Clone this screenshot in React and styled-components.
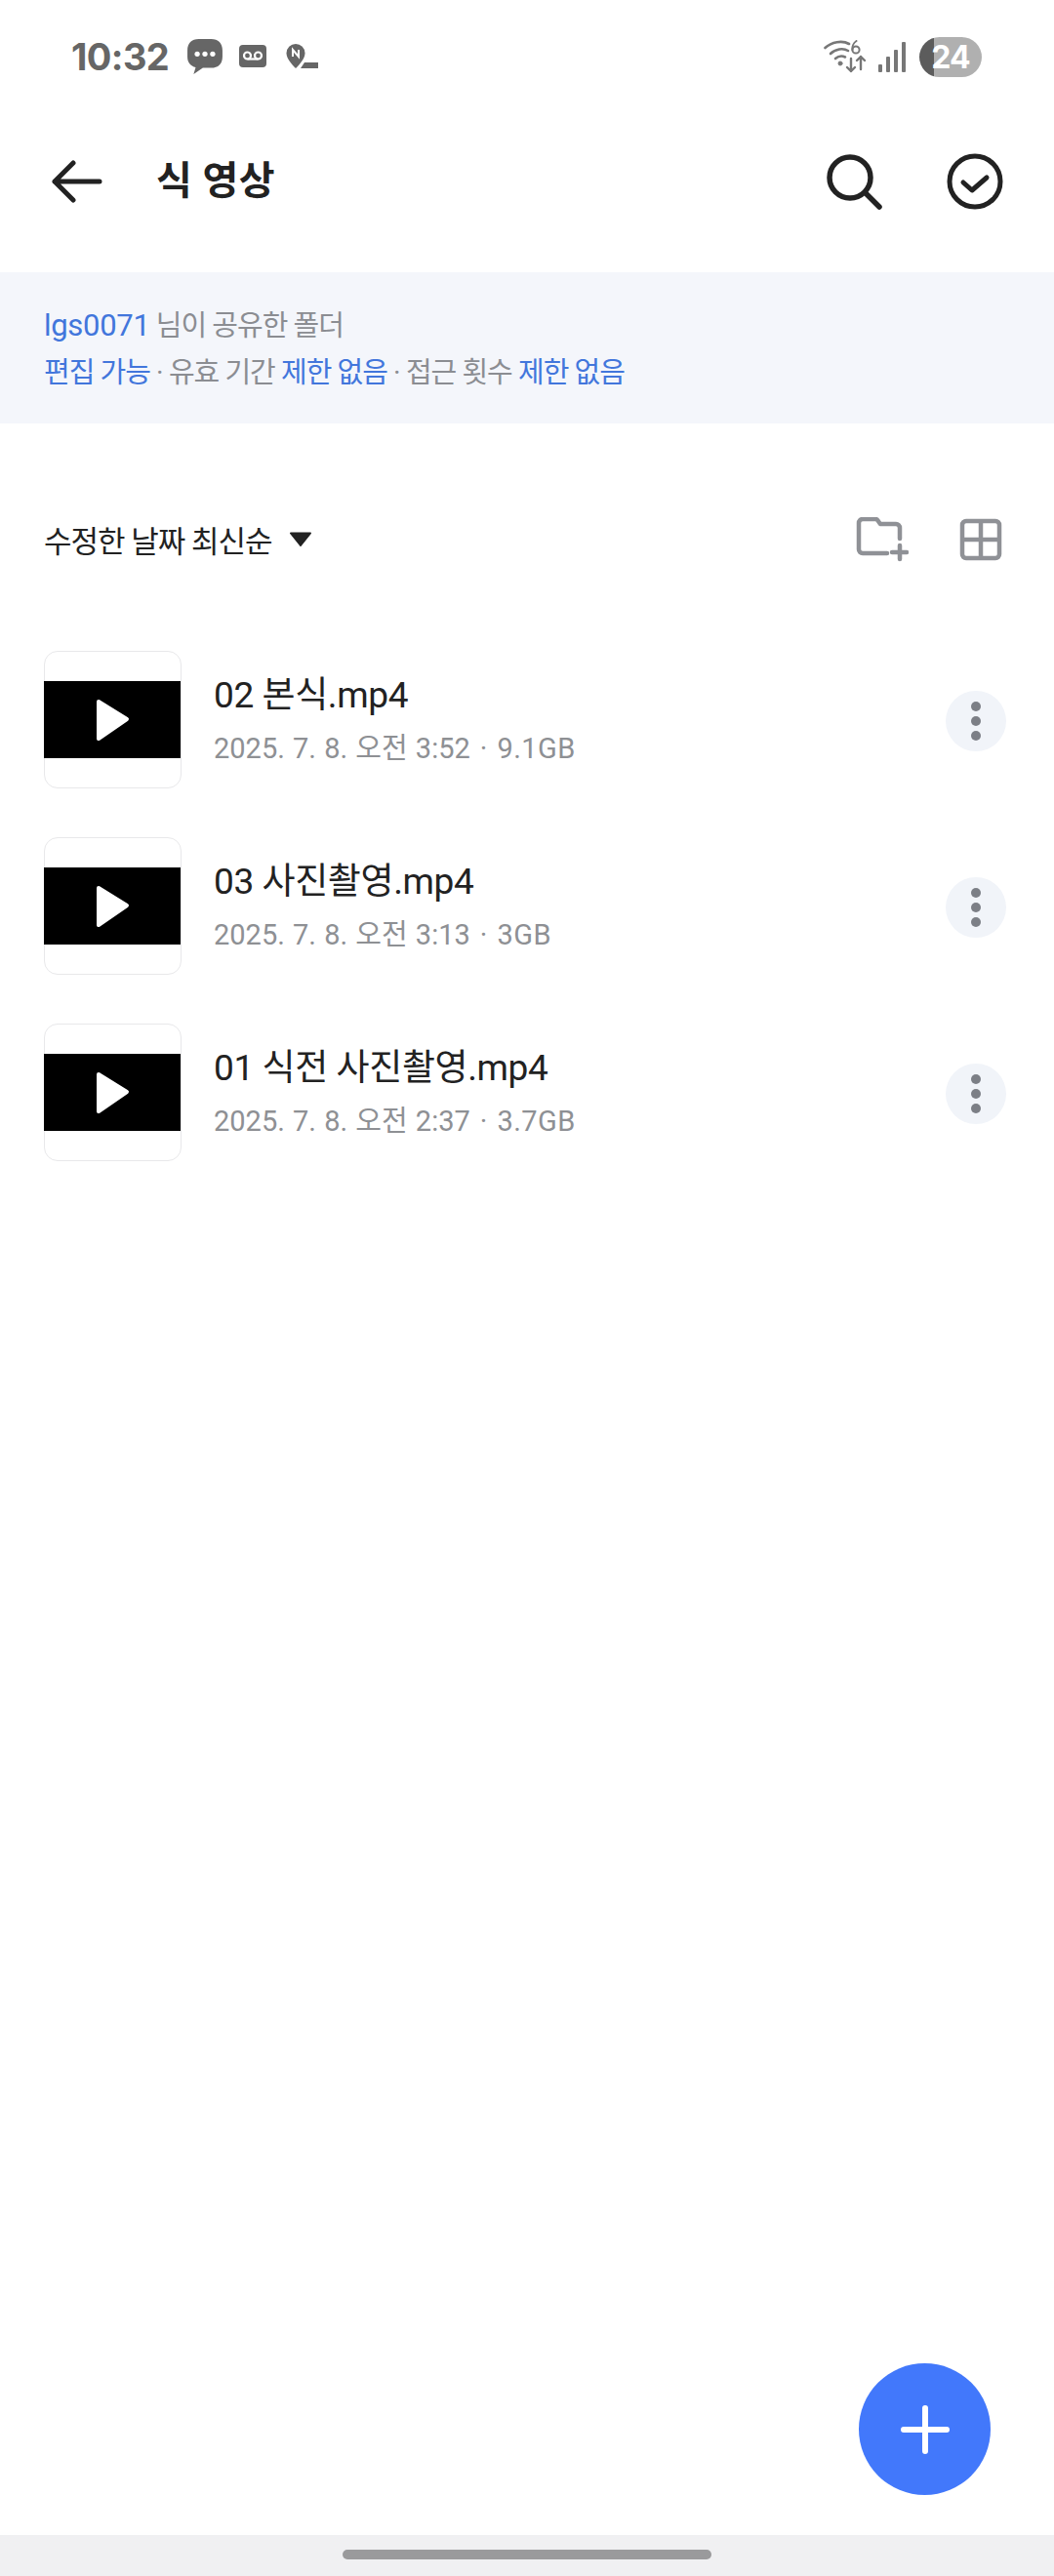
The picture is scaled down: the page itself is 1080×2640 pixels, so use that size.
import React from "react";
import styled, { createGlobalStyle } from "styled-components";

const Global = createGlobalStyle`
  html, body { margin: 0; padding: 0; background: #fff; }
  * { box-sizing: border-box; }
  body { font-family: "Roboto", "Noto Sans CJK KR", sans-serif; }
`;
const Page = styled.div`
  position: relative; width: 1080px; height: 2640px; background: #fff;
  display: flex; flex-direction: column; overflow: hidden;
`;
const StatusBar = styled.div`
  height: 116px; display: flex; align-items: center; justify-content: space-between;
  padding: 0 74px 0 73px; flex: none;
`;
const StatusLeft = styled.div`display: flex; align-items: center;`;
const Time = styled.span`
  font-family: "Inter", sans-serif; font-weight: 700; font-size: 38px; letter-spacing: -0.6px; color: #666; width: 118px;
`;
const StatusRight = styled.div`display: flex; align-items: center;`;
const Battery = styled.div`
  position: relative; width: 64px; height: 41px; border-radius: 21px; overflow: hidden; margin-left: 14px;
  background: linear-gradient(90deg, #5c5c5c 0 15px, #b0b0b0 15px);
  display: flex; align-items: center; justify-content: center;
  font-family: "Inter", sans-serif; font-weight: 700; font-size: 32px; color: #fff; letter-spacing: -1px;
`;
const Header = styled.div`
  height: 140px; flex: none; display: flex; align-items: center; padding: 0 52px 0 53px; margin-bottom: 23px;
`;
const Title = styled.h1`
  margin: 0 0 0 55px; flex: 1; font-size: 40px; font-weight: 700; color: #222; line-height: 1; letter-spacing: 0.4px;
`;
const HeaderActions = styled.div`display: flex; align-items: center; gap: 66px;`;
const Banner = styled.div`
  height: 155px; flex: none; background: #f4f6fb; padding: 31px 45px 0; font-size: 29px; line-height: 48px;
  letter-spacing: -1px; color: #8b8d92; white-space: nowrap;
`;
const Blue = styled.span`color: #4276dc;`;
const Latin = styled.span`font-size: 31px; letter-spacing: -0.3px;`;
const SortRow = styled.div`
  margin-top: 68px; height: 100px; flex: none; display: flex; align-items: center; justify-content: space-between; padding: 0 45px;
`;
const SortLabel = styled.div`
  display: flex; align-items: center; gap: 17px; font-size: 31px; color: #222; letter-spacing: -1px;
`;
const SortActions = styled.div`display: flex; align-items: center; gap: 52px; margin-right: 8px; padding-top: 2px;`;
const List = styled.div`margin-top: 41px; display: flex; flex-direction: column;`;
const Row = styled.div`
  height: 191px; display: flex; align-items: center; padding: 0 49px 0 45px;
`;
const Thumb = styled.div`
  width: 141px; height: 141px; border: 1.5px solid #e8e8ea; border-radius: 14px; flex: none;
  display: flex; align-items: center; margin-top: -2px;
`;
const ThumbVideo = styled.div`
  width: 141px; margin-left: -1.5px; height: 79px; background: #000; display: flex; align-items: center; justify-content: center;
`;
const Info = styled.div`flex: 1; margin-left: 33px; margin-top: -3px;`;
const Name = styled.div`
  font-size: 37px; line-height: 46px; color: #222; letter-spacing: -0.4px;
`;
const Meta = styled.div`
  margin-top: 13px; font-size: 29px; line-height: 36px; color: #8e9094; letter-spacing: 0;
  word-spacing: 1px;
`;
const Sep = styled.span`margin: 0 10px;`;
const Size = styled.span`letter-spacing: 0.5px;`;
const Kebab = styled.div`
  width: 62px; height: 62px; border-radius: 50%; background: #f1f4f9; flex: none;
  display: flex; flex-direction: column; align-items: center; justify-content: center; gap: 5px;
`;
const Dot = styled.span`width: 10px; height: 10px; border-radius: 50%; background: #7c7f86;`;
const Fab = styled.div`
  position: absolute; left: 880px; top: 2422px; width: 135px; height: 135px; border-radius: 50%;
  background: #4278fb; display: flex; align-items: center; justify-content: center;
`;
const NavBar = styled.div`
  margin-top: auto; height: 42px; flex: none; background: #f0f0f2; display: flex; justify-content: center; padding-top: 15px;
`;
const Pill = styled.div`width: 378px; height: 10px; border-radius: 5px; background: #9a9a9c;`;

const Back = () => (
  <svg width="52" height="44" viewBox="0 0 52 44" fill="none" stroke="#222" strokeWidth="5" strokeLinecap="round" strokeLinejoin="round">
    <path d="M3 22H49M22 3 3 22l19 19" />
  </svg>
);
const Search = () => (
  <svg width="58" height="58" viewBox="0 0 58 58" fill="none" stroke="#222" strokeWidth="5.5" strokeLinecap="round">
    <circle cx="25" cy="25" r="21" /><path d="M41 41 55 55" />
  </svg>
);
const Check = () => (
  <svg width="58" height="58" viewBox="0 0 58 58" fill="none" stroke="#222" strokeWidth="5" strokeLinecap="round" strokeLinejoin="round">
    <circle cx="29" cy="29" r="26" /><path d="M17 30 26 38 41 25" />
  </svg>
);
const Caret = () => (
  <svg width="24" height="15" viewBox="0 0 24 15"><path d="M2 1.5H22L12 14Z" fill="#222" stroke="#222" strokeWidth="2" strokeLinejoin="round" /></svg>
);
const FolderPlus = () => (
  <svg width="54" height="46" viewBox="0 0 54 46" fill="none" stroke="#8f9196" strokeWidth="4.5" strokeLinecap="round" strokeLinejoin="round">
    <path d="M32 37H7a4 4 0 0 1-4-4V6a4 4 0 0 1 4-4h13a3 3 0 0 1 2.5 1.5L25 7h16a4 4 0 0 1 4 4v11" />
    <path d="M45 29V43M37 36H52" />
  </svg>
);
const Grid = () => (
  <svg width="44" height="44" viewBox="0 0 44 44" fill="none" stroke="#8f9196" strokeWidth="4.5" strokeLinejoin="round">
    <rect x="3" y="3" width="38" height="38" rx="4" /><path d="M22 3V41M3 22H41" />
  </svg>
);
const Play = () => (
  <svg width="36" height="46" viewBox="0 0 36 46">
    <path d="M4 4 33 22 4 42Z" fill="#fff" stroke="#fff" strokeWidth="4" strokeLinejoin="round" />
  </svg>
);
const Plus = () => (
  <svg width="50" height="50" viewBox="0 0 50 50" stroke="#fff" strokeWidth="6" strokeLinecap="round"><path d="M25 3V47M3 25H47" /></svg>
);
const Chat = () => (
  <svg width="38" height="38" viewBox="0 0 36 36" style={{ marginRight: 16 }}>
    <path d="M12 1h12c7 0 11 4 11 11v6c0 7-4 11-11 11H16l-9 6 2-6.500C4 27 1 24 1 18v-6C1 5 5 1 12 1Z" fill="#666" />
    <circle cx="10.500" cy="15.500" r="2.500" fill="#fff" /><circle cx="18" cy="15.500" r="2.500" fill="#fff" /><circle cx="25.500" cy="15.500" r="2.500" fill="#fff" />
  </svg>
);
const Voicemail = () => (
  <svg width="28" height="24" viewBox="0 0 28 24" style={{ marginRight: 20 }}>
    <rect width="28" height="23" rx="4" fill="#666" />
    <g fill="none" stroke="#fff" strokeWidth="2.200"><circle cx="8.500" cy="11" r="3.500" /><circle cx="19.500" cy="11" r="3.500" /><path d="M8.500 14.500H19.500" /></g>
  </svg>
);
const NaverPin = () => (
  <svg width="34" height="28" viewBox="0 0 34 28">
    <path d="M10 1a9.500 9.500 0 0 1 9.500 9.500C19.500 16 14 22 10 26 6 22 .500 16 .500 10.500A9.500 9.500 0 0 1 10 1Z" fill="#666" />
    <path d="M7 14V7l6 7V7" fill="none" stroke="#fff" strokeWidth="2" />
    <path d="M15 26 19 20H33V26Z" fill="#666" />
  </svg>
);
const Wifi = () => (
  <svg width="46" height="34" viewBox="0 0 46 34" fill="none" stroke="#777" strokeLinecap="round" strokeLinejoin="round">
    <g strokeWidth="2.600"><path d="M1.500 8C8 2 19 0 26 4" /><path d="M7 14C12 9 20 8 25 11" /><path d="M12 19c3-2.500 7-3 10-1.500" /></g>
    <circle cx="17" cy="24" r="2" fill="#777" />
    <circle cx="33" cy="10" r="3.600" strokeWidth="2" />
    <path d="M29.500 10c-.500-3 1-7 4-9" strokeWidth="2" />
    <g strokeWidth="2.400"><path d="M28 19V32M24 28l4 4 4-4" /><path d="M38 30V17M34 21l4-4 4 4" /></g>
  </svg>
);
const Signal = () => (
  <svg width="28" height="31" viewBox="0 0 28 31" fill="#777" style={{ marginLeft: 10 }}>
    <rect x="0" y="23" width="4" height="8" rx="1" /><rect x="8" y="15" width="4" height="16" rx="1" />
    <rect x="16" y="8" width="4" height="23" rx="1" /><rect x="24" y="0" width="4" height="31" rx="1" />
  </svg>
);

const files = [
  { name: "02 본식.mp4", date: "2025. 7. 8. 오전 3:52", size: "9.1GB" },
  { name: "03 사진촬영.mp4", date: "2025. 7. 8. 오전 3:13", size: "3GB" },
  { name: "01 식전 사진촬영.mp4", date: "2025. 7. 8. 오전 2:37", size: "3.7GB" },
];

export default function App() {
  return (
    <Page>
      <Global />
      <StatusBar>
        <StatusLeft>
          <Time>10:32</Time>
          <Chat /><Voicemail /><NaverPin />
        </StatusLeft>
        <StatusRight>
          <Wifi /><Signal />
          <Battery>24</Battery>
        </StatusRight>
      </StatusBar>
      <Header>
        <Back />
        <Title>식 영상</Title>
        <HeaderActions><Search /><Check /></HeaderActions>
      </Header>
      <Banner>
        <div><Blue><Latin>lgs0071</Latin></Blue> 님이 공유한 폴더</div>
        <div><Blue>편집 가능</Blue> · 유효 기간 <Blue>제한 없음</Blue> · 접근 횟수 <Blue>제한 없음</Blue></div>
      </Banner>
      <SortRow>
        <SortLabel>수정한 날짜 최신순 <Caret /></SortLabel>
        <SortActions><FolderPlus /><Grid /></SortActions>
      </SortRow>
      <List>
        {files.map((f) => (
          <Row key={f.name}>
            <Thumb><ThumbVideo><Play /></ThumbVideo></Thumb>
            <Info>
              <Name>{f.name}</Name>
              <Meta>{f.date}<Sep>·</Sep><Size>{f.size}</Size></Meta>
            </Info>
            <Kebab><Dot /><Dot /><Dot /></Kebab>
          </Row>
        ))}
      </List>
      <Fab><Plus /></Fab>
      <NavBar><Pill /></NavBar>
    </Page>
  );
}
